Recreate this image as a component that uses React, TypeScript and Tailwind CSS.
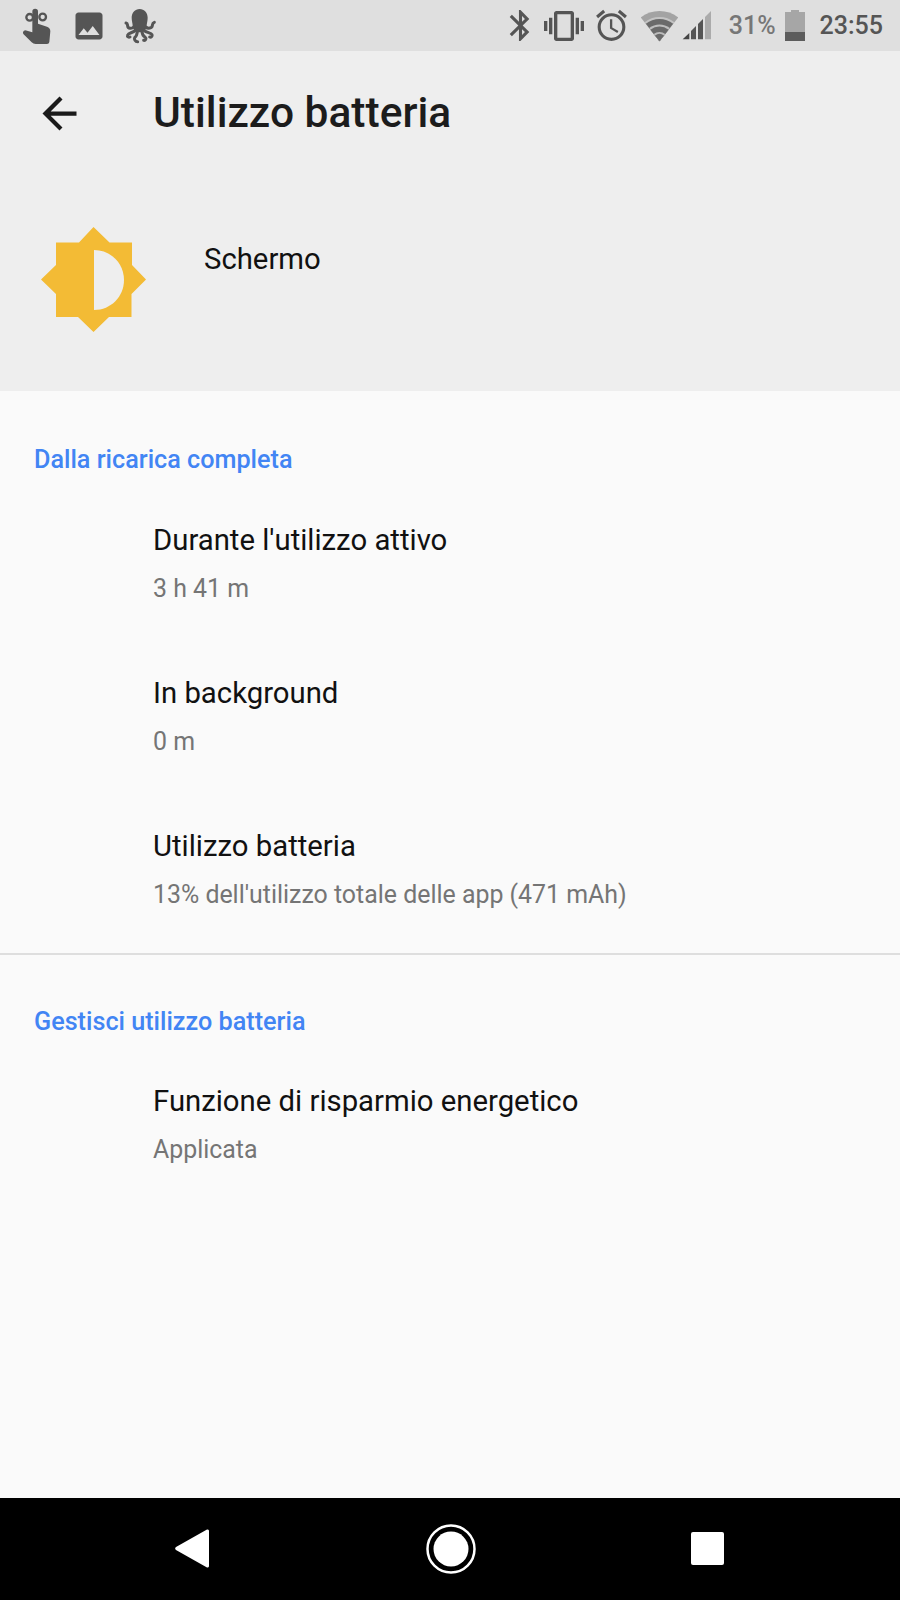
import { MdArrowBack, MdBluetooth, MdImage, MdOutlineAccessAlarm, MdVibration } from 'react-icons/md';

function HandIcon() {
  return (
    <svg width="50" height="46" viewBox="0 0 150 138">
      <path
        d="M52 26a8.500 8.500 0 0 1 17 0V62l27 9q10 3 10 14l-3 32q-1 6-7 6H62q-7 0-12-5L25 93q-4-8 6-11l21 6z"
        fill="#555"
      />
      <circle cx="44" cy="43" r="10" fill="none" stroke="#555" strokeWidth="7" />
      <circle cx="83" cy="42" r="10" fill="none" stroke="#555" strokeWidth="7" />
    </svg>
  );
}

function OctopusIcon() {
  return (
    <svg width="44" height="46" viewBox="0 0 132 138">
      <path d="M65 18c14 0 24 12 24 26 0 10-3 17-3 24 0 6-4 20-21 20S44 74 44 68c0-7-3-14-3-24 0-14 10-26 24-26z" fill="#555" />
      <g fill="none" stroke="#555" strokeWidth="9" strokeLinecap="round">
        <path d="M47 72c-6 6-17 5-18-3-1-5 0-8-5-9" />
        <path d="M83 72c7 6 19 4 20-4 1-5 0-8 6-10" />
        <path d="M52 82c-8 8-20 7-23 14-2 5 3 8 7 6" />
        <path d="M78 82c8 8 21 6 24 13 2 5-3 9-7 7" />
        <path d="M58 86c-1 10-3 14-8 18-2 4 1 12 9 12" />
        <path d="M72 86c1 10 3 14 10 17 4 3 1 10-5 9" />
      </g>
    </svg>
  );
}

function WifiIcon() {
  return (
    <svg width="37" height="33" viewBox="15 12 110 98">
      <path d="M70 108L14.600 37.100A90 90 0 0 1 125.400 37.100z" fill="#a3a3a3" />
      <path d="M70 108L25.700 51.300A72 72 0 0 1 114.300 51.300z" fill="#c4c4c4" />
      <path d="M70 108L29.400 56A66 66 0 0 1 110.600 56z" fill="#6a6a6a" />
      <path d="M70 108L39.200 68.600A50 50 0 0 1 100.800 68.600z" fill="#bdbdbd" />
      <path d="M70 108L43 73.300A44 44 0 0 1 97 73.300z" fill="#6a6a6a" />
      <path d="M70 108L52.800 86A28 28 0 0 1 87.200 86z" fill="#bdbdbd" />
      <path d="M70 108L56.500 90.700A22 22 0 0 1 83.500 90.700z" fill="#6a6a6a" />
    </svg>
  );
}

function SignalIcon() {
  return (
    <svg width="30" height="29" viewBox="138 20 90 87">
      <path d="M140 105L160 86V105z" fill="#444" />
      <path d="M165 105V80L180 65V105z" fill="#555" />
      <path d="M186 105V59L201 44V105z" fill="#555" />
      <path d="M207 105V38L225 20V105z" fill="#ababab" />
    </svg>
  );
}

function BatteryIcon() {
  return (
    <svg width="20" height="31" viewBox="0 0 20 31">
      <path d="M6 0h8v2h6v29H0V2h6z" fill="#a6a6a6" />
      <rect x="0" y="22" width="20" height="9" fill="#5c5c5c" />
    </svg>
  );
}

function BrightnessIcon() {
  return (
    <svg width="105" height="105" viewBox="0 0 105 105">
      <path
        d="M52.500 0L68.500 15.500H91V38L105 52.500 90.500 67V90H68L52.500 105 37 90H15V67L0 52.500 15 38V15.500H38z"
        fill="#f3bb35"
      />
      <path d="M53 23c17 0 30 13.500 30 30S70 83 53 83z" fill="#eeeeee" />
    </svg>
  );
}

function Row({ title, detail }: { title: string; detail: string }) {
  return (
    <div className="h-[153px] pl-[153px] pt-[20px]">
      <div className="text-[29.300px] leading-[36px] text-[#111111]">{title}</div>
      <div className="mt-[15px] text-[24.900px] leading-[32px] text-[#757575]">{detail}</div>
    </div>
  );
}

function SectionTitle({ children }: { children: string }) {
  return <h2 className="pl-[34px] text-[25.200px] font-medium leading-[32px] text-[#4285f4]">{children}</h2>;
}

export default function App() {
  return (
    <div className="flex h-[1600px] w-[900px] flex-col bg-[#fafafa] font-['Roboto',sans-serif]">
      <div className="flex h-[51px] items-center justify-between bg-[#dfdfdf] pl-[15px] pr-[17px] text-[#555555]">
        <div className="flex items-center">
          <HandIcon />
          <MdImage size={36} className="ml-[6px]" />
          <div className="ml-[11px]"><OctopusIcon /></div>
        </div>
        <div className="flex items-center">
          <MdBluetooth size={37} />
          <MdVibration size={40} className="ml-[5px]" />
          <MdOutlineAccessAlarm size={37} className="ml-[9px]" />
          <div className="ml-[11px]"><WifiIcon /></div>
          <div className="ml-[4px]"><SignalIcon /></div>
          <span className="ml-[17px] text-[25px] font-medium text-[#777777]">31%</span>
          <div className="ml-[9px]"><BatteryIcon /></div>
          <span className="ml-[15px] text-[25px] font-medium">23:55</span>
        </div>
      </div>

      <div className="h-[340px] bg-[#eeeeee]">
        <div className="flex h-[124px] items-center">
          <MdArrowBack size={51} className="ml-[34px] text-[#1a1a1a]" />
          <h1 className="ml-[68px] text-[42.500px] font-medium text-[#1c1c1c]">Utilizzo batteria</h1>
        </div>
        <div className="flex pl-[41px] pt-[52px]">
          <BrightnessIcon />
          <span className="ml-[58px] mt-[14px] text-[29.300px] leading-[36px] text-[#111111]">Schermo</span>
        </div>
      </div>

      <div className="flex-1 pt-[53px]">
        <SectionTitle>Dalla ricarica completa</SectionTitle>
        <div className="pt-[26px]">
          <Row title="Durante l'utilizzo attivo" detail="3 h 41 m" />
          <Row title="In background" detail="0 m" />
          <Row title="Utilizzo batteria" detail="13% dell'utilizzo totale delle app (471 mAh)" />
        </div>
        <div className="mt-[-8px] h-[2px] bg-[#dedede]" />
        <div className="pt-[51px]">
          <SectionTitle>Gestisci utilizzo batteria</SectionTitle>
          <div className="pt-[25px]">
            <Row title="Funzione di risparmio energetico" detail="Applicata" />
          </div>
        </div>
      </div>

      <div className="flex h-[102px] items-center justify-between bg-black pb-[1px] pl-[175px] pr-[176px]">
        <svg width="35" height="41" viewBox="0 0 35 41">
          <path d="M32 1.500a1.500 1.500 0 0 1 2 1.500v35a1.500 1.500 0 0 1-2 1.500L1 22a2 2 0 0 1 0-3z" fill="#fff" />
        </svg>
        <svg width="50" height="50" viewBox="0 0 50 50">
          <circle cx="25" cy="25" r="23.500" fill="none" stroke="#fff" strokeWidth="2.500" />
          <circle cx="25" cy="25" r="17.500" fill="#fff" />
        </svg>
        <div className="h-[33px] w-[33px] rounded-[2px] bg-white" />
      </div>
    </div>
  );
}
